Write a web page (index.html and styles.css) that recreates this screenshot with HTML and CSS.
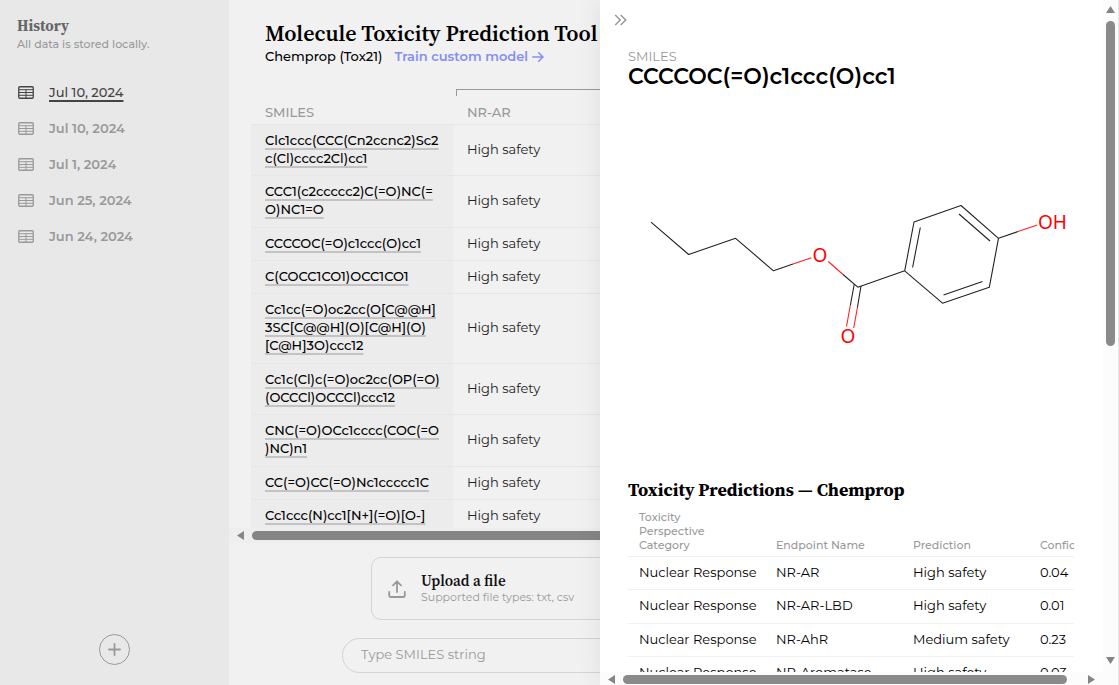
FILE: index.html
```html
<!DOCTYPE html>
<html lang="en">
<head>
<meta charset="utf-8">
<meta name="viewport" content="width=device-width, initial-scale=1">
<title>Molecule Toxicity Prediction Tool</title>
<link rel="stylesheet" href="styles.css">
</head>
<body>
<svg width="0" height="0" class="defs" aria-hidden="true">
  <symbol id="table-icon" viewBox="0 0 16 13">
    <rect x=".75" y=".75" width="14.5" height="11.5" rx="1" fill="none" stroke="currentColor" stroke-width="1.3"/>
    <path d="M1 3.7h14M1 6.5h14M1 9.3h14M8 3.7v8.3" fill="none" stroke="currentColor" stroke-width="1"/>
  </symbol>
</svg>
<div class="app">
  <aside class="sidebar">
    <h2 class="sidebar-title">History</h2>
    <p class="sidebar-note">All data is stored locally.</p>
    <nav class="history">
      <a class="history-item active" href="#"><svg class="table-icon"><use href="#table-icon"/></svg><span>Jul 10, 2024</span></a>
      <a class="history-item" href="#"><svg class="table-icon"><use href="#table-icon"/></svg><span>Jul 10, 2024</span></a>
      <a class="history-item" href="#"><svg class="table-icon"><use href="#table-icon"/></svg><span>Jul 1, 2024</span></a>
      <a class="history-item" href="#"><svg class="table-icon"><use href="#table-icon"/></svg><span>Jun 25, 2024</span></a>
      <a class="history-item" href="#"><svg class="table-icon"><use href="#table-icon"/></svg><span>Jun 24, 2024</span></a>
    </nav>
    <button class="add" aria-label="New prediction"><svg width="13" height="13" viewBox="0 0 13 13"><path d="M6.500 1v11M1 6.500h11" stroke="currentColor" stroke-width="1.800" stroke-linecap="round"/></svg></button>
  </aside>

  <main class="main">
    <header class="header">
      <h1 class="title">Molecule Toxicity Prediction Tool</h1>
      <div class="subtitle"><span>Chemprop (Tox21)</span>
        <a class="train" href="#">Train custom model <svg width="12" height="12" viewBox="0 0 12 12"><path d="M.8 7h10M6.700 2.700l4.300 4.300-4.300 4.300" fill="none" stroke="currentColor" stroke-width="1.500" stroke-linecap="round" stroke-linejoin="round"/></svg></a>
      </div>
    </header>
    <div class="results">
      <table class="grid">
        <thead>
          <tr class="group"><td></td><td class="bracket-cell"><div class="bracket"></div></td></tr>
          <tr><th>SMILES</th><th>NR-AR</th></tr>
        </thead>
        <tbody>
          <tr><td><a href="#">Clc1ccc(CCC(Cn2ccnc2)Sc2<br>c(Cl)cccc2Cl)cc1</a></td><td>High safety</td></tr>
          <tr class="roomy"><td><a href="#">CCC1(c2ccccc2)C(=O)NC(=<br>O)NC1=O</a></td><td>High safety</td></tr>
          <tr><td><a href="#">CCCCOC(=O)c1ccc(O)cc1</a></td><td>High safety</td></tr>
          <tr><td><a href="#">C(COCC1CO1)OCC1CO1</a></td><td>High safety</td></tr>
          <tr class="roomy"><td><a href="#">Cc1cc(=O)oc2cc(O[C@@H]<br>3SC[C@@H](O)[C@H](O)<br>[C@H]3O)ccc12</a></td><td>High safety</td></tr>
          <tr><td><a href="#">Cc1c(Cl)c(=O)oc2cc(OP(=O)<br>(OCCCl)OCCCl)ccc12</a></td><td>High safety</td></tr>
          <tr class="roomy"><td><a href="#">CNC(=O)OCc1cccc(COC(=O<br>)NC)n1</a></td><td>High safety</td></tr>
          <tr><td><a href="#">CC(=O)CC(=O)Nc1ccccc1C</a></td><td>High safety</td></tr>
          <tr><td><a href="#">Cc1ccc(N)cc1[N+](=O)[O-]</a></td><td>High safety</td></tr>
        </tbody>
      </table>
    </div>
    <div class="bar bar-main"><i class="arrow left"></i><i class="thumb"></i></div>
    <div class="inputs">
      <button class="upload">
        <svg width="18" height="18" viewBox="0 0 18 18"><path d="M1.2 12v3.2q0 1.8 1.8 1.8h12q1.8 0 1.8-1.8V12M9 12V1.5M5 5.300l4-4 4 4" fill="none" stroke="currentColor" stroke-width="1.8" stroke-linecap="round" stroke-linejoin="round"/></svg>
        <span class="upload-text"><strong>Upload a file</strong><small>Supported file types: txt, csv</small></span>
      </button>
      <input class="smiles-input" type="text" placeholder="Type SMILES string" aria-label="SMILES string">
    </div>
  </main>

  <section class="drawer">
    <div class="drawer-body">
      <button class="close" aria-label="Close panel"><svg width="13" height="12" viewBox="0 0 13 12"><path d="M1.2 1l5 5-5 5M6.7 1l5 5-5 5" fill="none" stroke="currentColor" stroke-width="1.5"/></svg></button>
      <p class="label">SMILES</p>
      <h2 class="molecule-name">CCCCOC(=O)c1ccc(O)cc1</h2>
      <svg class="molecule" viewBox="628 90 446 380" role="img" aria-label="Molecule structure">
        <g fill="none" stroke="#222" stroke-width="1.1" stroke-linejoin="round">
          <path d="M651 222.200L688.700 254.500 735.600 238.300 773.500 270.800 793 264.100"/>
          <path d="M843 274.500L857.800 287.200 904.700 270.800"/>
          <path d="M854.300 284L850.300 305.500M861 286L857.500 307"/>
          <path d="M904.700 270.800L914 222 961 205.500 998.500 238.300 989.300 287.300 942.500 303.200Z"/>
          <path d="M912.600 267.500L920.300 227.500M959 214L990 241M982.500 281.500L943.500 295M998.500 238.300L1018 231.600"/>
        </g>
        <path d="M793 264.100L811.500 257.700M828.300 261.500L843 274.500M850.300 305.500L846.500 326.500M857.500 307L853.700 328M1018 231.600L1037.300 225" fill="none" stroke="#f22" stroke-width="1.1"/>
        <g class="atoms"><text x="820" y="262" text-anchor="middle">O</text><text x="848" y="343" text-anchor="middle">O</text><text x="1038" y="229">OH</text></g>
      </svg>
      <h2 class="section-title">Toxicity Predictions — Chemprop</h2>
      <div class="predictions">
        <table class="prediction-table">
          <thead><tr><th class="category">Toxicity<br>Perspective<br>Category</th><th class="endpoint">Endpoint Name</th><th class="prediction">Prediction</th><th class="confidence">Confidence</th></tr></thead>
          <tbody>
            <tr><td>Nuclear Response</td><td>NR-AR</td><td>High safety</td><td>0.04</td></tr>
            <tr class="roomy"><td>Nuclear Response</td><td>NR-AR-LBD</td><td>High safety</td><td>0.01</td></tr>
            <tr><td>Nuclear Response</td><td>NR-AhR</td><td>Medium safety</td><td>0.23</td></tr>
            <tr><td>Nuclear Response</td><td>NR-Aromatase</td><td>High safety</td><td>0.03</td></tr>
          </tbody>
        </table>
      </div>
    </div>
    <div class="bar-y"><i class="arrow up"></i><i class="thumb"></i><i class="arrow down"></i></div>
    <div class="bar bar-drawer"><i class="arrow left"></i><i class="thumb"></i><i class="arrow right"></i></div>
  </section>
</div>
</body>
</html>
```
FILE: styles.css
```css
* { box-sizing: border-box; }
body {
  margin: 0;
  font: 13px/18px Montserrat, Inter, sans-serif;
  color: #000;
  background: #f1f1f1;
}
h1, h2, p { margin: 0; }
h1, h2, strong { font-family: "Source Serif 4", "Source Serif Pro", "Liberation Serif", serif; font-weight: 600; }
button { font: inherit; background: none; border: 0; padding: 0; cursor: pointer; }
a { color: inherit; text-decoration: none; }
.defs { position: absolute; }

.app { position: relative; display: flex; height: 100vh; overflow: hidden; }

.sidebar {
  flex: 0 0 229px;
  display: flex;
  flex-direction: column;
  padding: 16px 17px 20px;
  background: #e8e8e8;
  color: #999;
}
.sidebar-title { font-size: 15px; line-height: 20px; font-weight: 700; color: #666; }
.sidebar-note { font-size: 11px; line-height: 16px; font-weight: 500; }
.history { display: flex; flex-direction: column; margin-top: 22px; flex: 1; }
.history-item { display: flex; align-items: center; gap: 15px; height: 36px; padding-left: 1px; font-weight: 600; }
.history-item.active { color: #444; font-weight: 500; }
.history-item.active span { text-decoration: underline; text-decoration-thickness: 2px; text-underline-offset: 3px; text-decoration-skip-ink: none; }
.table-icon { width: 16px; height: 13px; }
.add {
  align-self: center;
  display: grid;
  place-items: center;
  width: 31px;
  height: 31px;
  border: 1px solid #999;
  border-radius: 50%;
  color: #999;
}

.main { flex: 1; min-width: 0; display: flex; flex-direction: column; }
.header { padding: 21px 36px 0; }
.title { font-size: 22px; line-height: 25px; white-space: nowrap; }
.subtitle { display: flex; gap: 12px; line-height: 20px; font-weight: 500; }
.train { display: flex; align-items: center; gap: 4px; color: #858ef2; font-weight: 600; }

.results { flex: 1; min-height: 0; overflow: hidden; padding: 23px 0 0 22px; }
.grid { width: 100%; table-layout: fixed; border-collapse: separate; border-spacing: 0; }
.grid td, .grid th { padding: 6px 14px 8px; text-align: left; border-bottom: 1px solid #e6e6e6; }
.grid tr > :first-child { width: 202px; white-space: nowrap; }
.grid .group td { padding: 0; border: 0; }
.grid .group .bracket-cell { padding-left: 3px; }
.bracket { height: 7px; border: solid #999; border-width: 1px 0 0 1px; }
.grid th { padding: 7px 14px 3px; font-weight: 500; color: #999; }
.grid tbody td { color: #222; }
.grid tbody td:first-child { background: #ececec; color: #000; font-weight: 500; }
.grid .roomy td { padding-bottom: 9px; }
.grid a { text-decoration: underline; text-decoration-color: #c3c3c3; text-decoration-thickness: 2px; text-underline-offset: 3px; }

.bar { display: flex; align-items: center; height: 15px; background: #eee; }
.bar .thumb { height: 9px; border-radius: 5px; background: #858585; }
.bar-main { padding-left: 8px; gap: 8px; }
.bar-main .thumb { flex: 1; }
.arrow { width: 7px; height: 9px; background: #858585; }
.arrow.left { clip-path: polygon(0 50%, 100% 0, 100% 100%); }
.arrow.right { clip-path: polygon(100% 50%, 0 0, 0 100%); }
.arrow.up { clip-path: polygon(50% 0, 100% 100%, 0 100%); }
.arrow.down { clip-path: polygon(50% 100%, 100% 0, 0 0); }

.inputs { display: flex; flex-direction: column; align-items: center; gap: 18px; padding: 14px 0 12px; }
.upload {
  display: flex;
  align-items: center;
  gap: 15px;
  width: 606px;
  max-width: 90%;
  height: 63px;
  padding: 0 16px;
  border: 1px solid #d4d4d4;
  border-radius: 10px;
  color: #999;
  text-align: left;
}
.upload-text { display: flex; flex-direction: column; padding-bottom: 2px; }
.upload strong { font-size: 15px; line-height: 18px; color: #111; }
.upload small { font-size: 11px; line-height: 14px; }
.smiles-input {
  width: 664px;
  max-width: 95%;
  height: 35px;
  padding: 0 18px 3px;
  border: 1px solid #d4d4d4;
  border-radius: 18px;
  background: none;
  font: inherit;
}
.smiles-input::placeholder { color: #9a9a9a; }

.drawer {
  position: absolute;
  top: 0;
  right: 0;
  bottom: 0;
  width: 519px;
  max-width: 100%;
  display: grid;
  grid-template-columns: minmax(0, 1fr) 15px;
  grid-template-rows: minmax(0, 1fr) 13px;
  border-right: 1px solid #e6e6e6;
  background: #fff;
  box-shadow: 0 0 24px rgba(0, 0, 0, .08);
}
.drawer-body { overflow: hidden; padding: 14px 29px 0 28px; }
.close { display: block; margin: 0 0 22px -14px; height: 12px; color: #999; }
.close svg { display: block; }
.label { line-height: 16px; color: #999; }
.molecule-name { font: 600 22px/26px Montserrat, Inter, sans-serif; }
.molecule { display: block; width: 100%; height: auto; }
.atoms { font: 19px "Noto Sans", sans-serif; fill: #f00; }
.section-title { margin-top: 8px; font-size: 18px; line-height: 24px; font-weight: 700; }
.predictions { overflow: hidden; padding-top: 8px; }
.prediction-table { width: 540px; table-layout: fixed; border-collapse: separate; border-spacing: 0; }
.prediction-table th, .prediction-table td { padding: 6px 11px 8px; text-align: left; border-bottom: 1px solid #f0f0f0; white-space: nowrap; }
.prediction-table th { padding: 0 11px 4px; font-size: 11px; line-height: 14px; font-weight: 500; vertical-align: bottom; color: #999; }
.prediction-table .roomy td { padding-bottom: 9px; }
.category, .endpoint { width: 137px; }
.prediction { width: 127px; }

.bar-y { display: flex; flex-direction: column; align-items: center; padding: 6px 0 8px; background: #fcfcfc; }
.bar-y .arrow { width: 9px; height: 7px; }
.bar-y .thumb { width: 9px; height: 325px; margin: 8px 0 auto; border-radius: 5px; background: #8a8a8a; }
.bar-drawer { grid-column: 1 / -1; height: 13px; padding: 2px 23px 0 8px; gap: 8px; background: #fcfcfc; }
.bar-drawer .thumb { flex: 1; margin-right: 13px; background: #8a8a8a; }
```
